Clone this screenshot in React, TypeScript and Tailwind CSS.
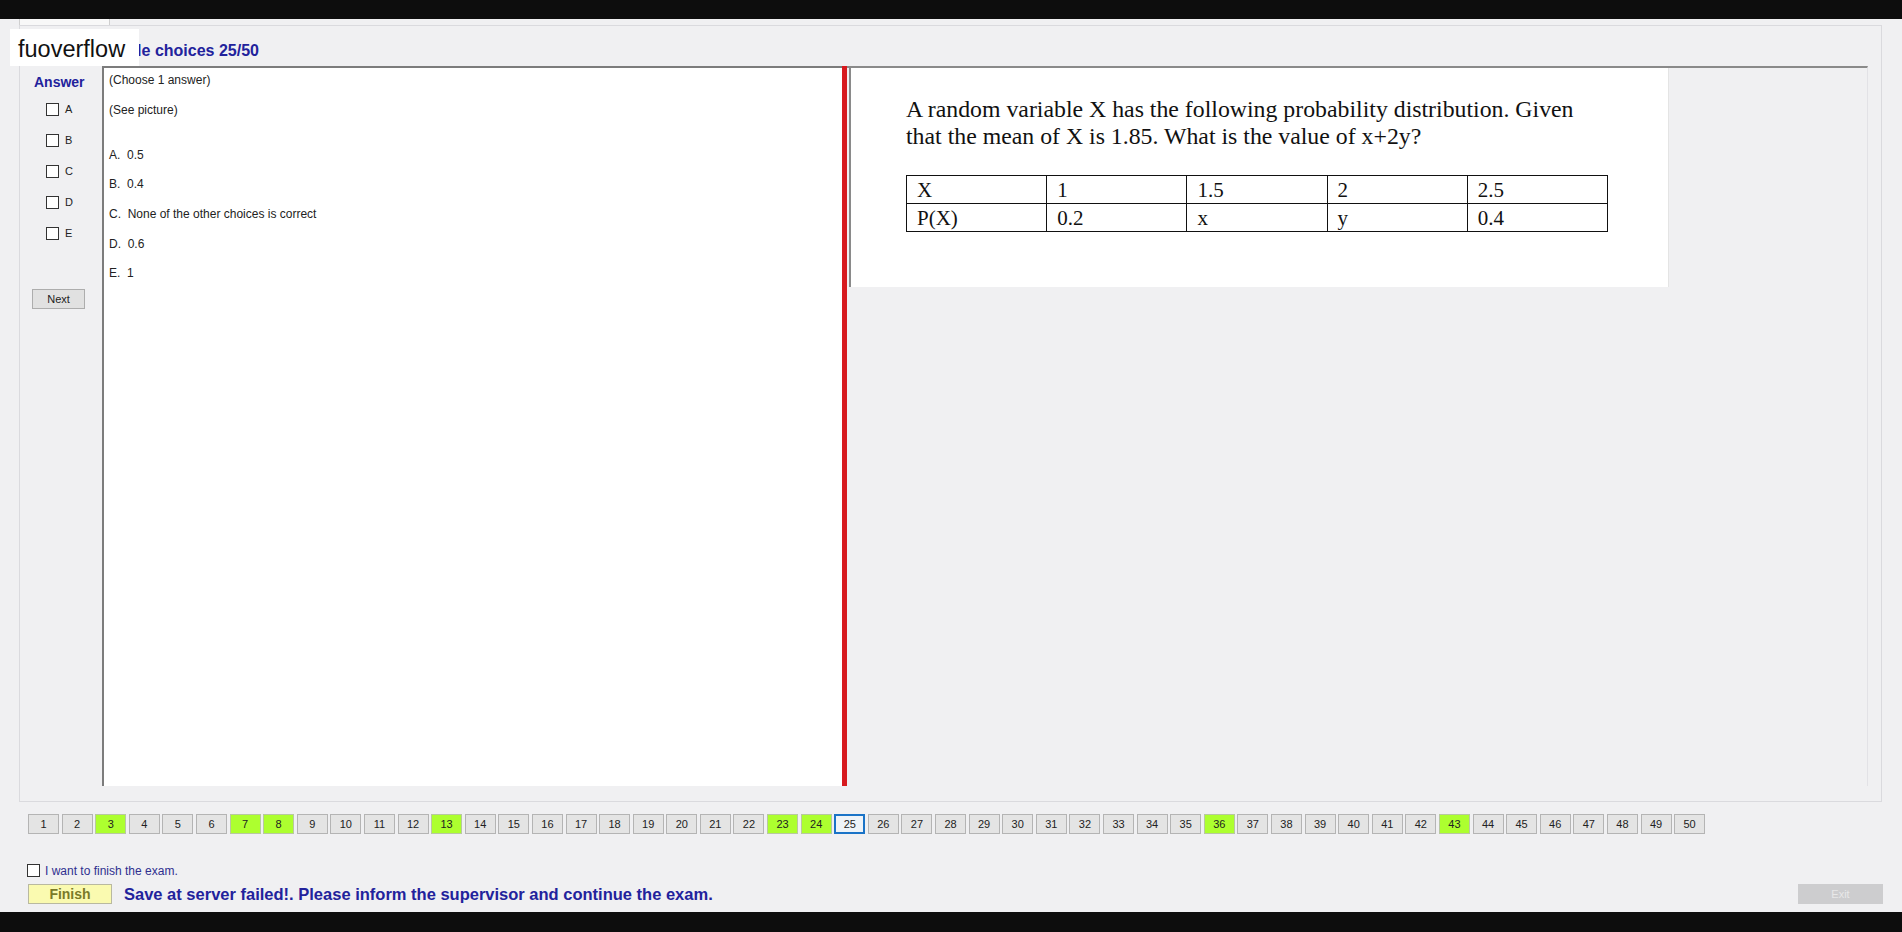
import React from "react";

const answered = [3, 7, 8, 13, 23, 24, 36, 43];
const current = 25;

const choices = [
  { text: "A.  0.5", mt: "mt-[29px]" },
  { text: "B.  0.4", mt: "mt-[13px]" },
  { text: "C.  None of the other choices is correct", mt: "mt-[14px]" },
  { text: "D.  0.6", mt: "mt-[14px]" },
  { text: "E.  1", mt: "mt-[13px]" },
];

const letters = ["A", "B", "C", "D", "E"];

const tableRows = [
  ["X", "1", "1.5", "2", "2.5"],
  ["P(X)", "0.2", "x", "y", "0.4"],
];

const sans = { fontFamily: '"Liberation Sans", Arial, sans-serif' };
const serif = { fontFamily: '"Liberation Serif", "Times New Roman", serif' };

const Box = () => (
  <span className="inline-block w-[13px] h-[13px] bg-white border border-[#333]" />
);

export default function App() {
  const nums = Array.from({ length: 50 }, (_, i) => i + 1);

  return (
    <div
      className="w-[1902px] h-[932px] bg-[#0d0d0d] flex flex-col overflow-hidden"
      style={sans}
    >
      <div className="h-[19px]" />

      <div className="h-[893px] bg-[#f0f0f2] relative flex flex-col">
        {/* watermark over the tab title */}
        <div className="absolute left-[10px] top-[10px] w-[129px] h-[37px] bg-white flex items-center pl-[8px] pt-[5px] text-[23.5px] text-[#111] z-10">
          fuoverflow
        </div>

        {/* tab control */}
        <div className="ml-[19px] w-[1863px] flex flex-col">
          <div className="h-[6px] flex">
            <div className="w-[91px] bg-[#f8f8f8] border-l border-r border-[#cfcfcf]" />
          </div>
          <div className="h-[777px] border border-[#dadade] flex flex-col">
            <div className="h-[40px] flex items-center pl-[70px] pt-[9px]">
              <span className="text-[16px] font-bold text-[#22229c]">
                Multiple choices 25/50
              </span>
            </div>

            <div className="h-[720px] flex">
              {/* answer sidebar */}
              <div className="w-[82px] flex flex-col">
                <div className="mt-[7px] h-[18px] pl-[14px] flex items-center text-[14px] font-bold text-[#22229c]">
                  Answer
                </div>
                {letters.map((l, i) => (
                  <div
                    key={l}
                    className={`${i === 0 ? "mt-[10px]" : "mt-[15px]"} h-[16px] pl-[26px] flex items-center gap-[6px] text-[11px] text-[#222]`}
                  >
                    <Box />
                    <span>{l}</span>
                  </div>
                ))}
                <div className="mt-[48px] ml-[12px] w-[53px] h-[20px] bg-[#e1e1e1] border border-[#adadad] flex items-center justify-center text-[11px] text-[#222]">
                  Next
                </div>
              </div>

              {/* choices panel */}
              <div className="w-[740px] bg-white border-l-2 border-t-2 border-[#7c7c7c] flex flex-col pl-[5px] text-[12px] text-[#222]">
                <div className="mt-[4px] h-[16px] flex items-center">(Choose 1 answer)</div>
                <div className="mt-[14px] h-[16px] flex items-center">(See picture)</div>
                {choices.map((c) => (
                  <div key={c.text} className={`${c.mt} h-[16px] flex items-center whitespace-pre`}>
                    {c.text}
                  </div>
                ))}
              </div>

              {/* splitter */}
              <div className="w-[5px] bg-[#d71a1f]" />

              {/* picture area */}
              <div className="w-[1021px] border-t-2 border-[#8a8a8a] border-r border-r-[#e2e2e6]">
                <div className="ml-[2px] w-[820px] h-[219px] bg-white border-l-2 border-[#8a8a8a] border-r border-r-[#e4e4e4] pl-[55px] pt-[28px]">
                  <div
                    className="text-[23.8px] leading-[27px] text-[#111] whitespace-nowrap"
                    style={serif}
                  >
                    A random variable X has the following probability distribution. Given
                    <br />
                    that the mean of X is 1.85. What is the value of x+2y?
                  </div>
                  <table
                    className="mt-[25px] w-[702px] border-collapse text-[21px] text-[#111]"
                    style={serif}
                  >
                    <tbody>
                      {tableRows.map((row, ri) => (
                        <tr key={ri} className="h-[28px]">
                          {row.map((cell, ci) => (
                            <td
                              key={ci}
                              className="border border-[#111] w-[140px] pl-[10px] leading-[24px] align-middle"
                            >
                              {cell}
                            </td>
                          ))}
                        </tr>
                      ))}
                    </tbody>
                  </table>
                </div>
              </div>
            </div>
          </div>
        </div>

        {/* question navigation */}
        <div className="mt-[12px] pl-[28px] flex gap-[2.6px]">
          {nums.map((n) => {
            const isAns = answered.includes(n);
            const isCur = n === current;
            return (
              <div
                key={n}
                className={`w-[31px] h-[20px] flex items-center justify-center text-[11px] text-[#222] ${
                  isCur
                    ? "border-2 border-[#1a73c7] bg-[#eef3f8]"
                    : isAns
                    ? "border border-[#b8c8a0] bg-[#adff2f]"
                    : "border border-[#b4b4b4] bg-[#e4e4e4]"
                }`}
              >
                {n}
              </div>
            );
          })}
        </div>

        <div className="mt-[30px] pl-[27px] h-[13px] flex items-center gap-[5px]">
          <Box />
          <span className="text-[12px] text-[#2f2f8f]">I want to finish the exam.</span>
        </div>

        <div className="mt-[7px] h-[20px] pl-[28px] pr-[19px] flex items-center">
          <div className="w-[84px] h-[20px] bg-[#fafab0] border border-[#b9b9a0] flex items-center justify-center text-[14px] font-bold text-[#7a7a28]">
            Finish
          </div>
          <span className="ml-[12px] text-[16.5px] font-bold text-[#22229c]">
            Save at server failed!. Please inform the supervisor and continue the exam.
          </span>
          <div className="ml-auto w-[85px] h-[20px] bg-[#cdcdcf] flex items-center justify-center text-[11px] text-[#e8e8e8]">
            Exit
          </div>
        </div>
      </div>

      <div className="h-[20px]" />
    </div>
  );
}
